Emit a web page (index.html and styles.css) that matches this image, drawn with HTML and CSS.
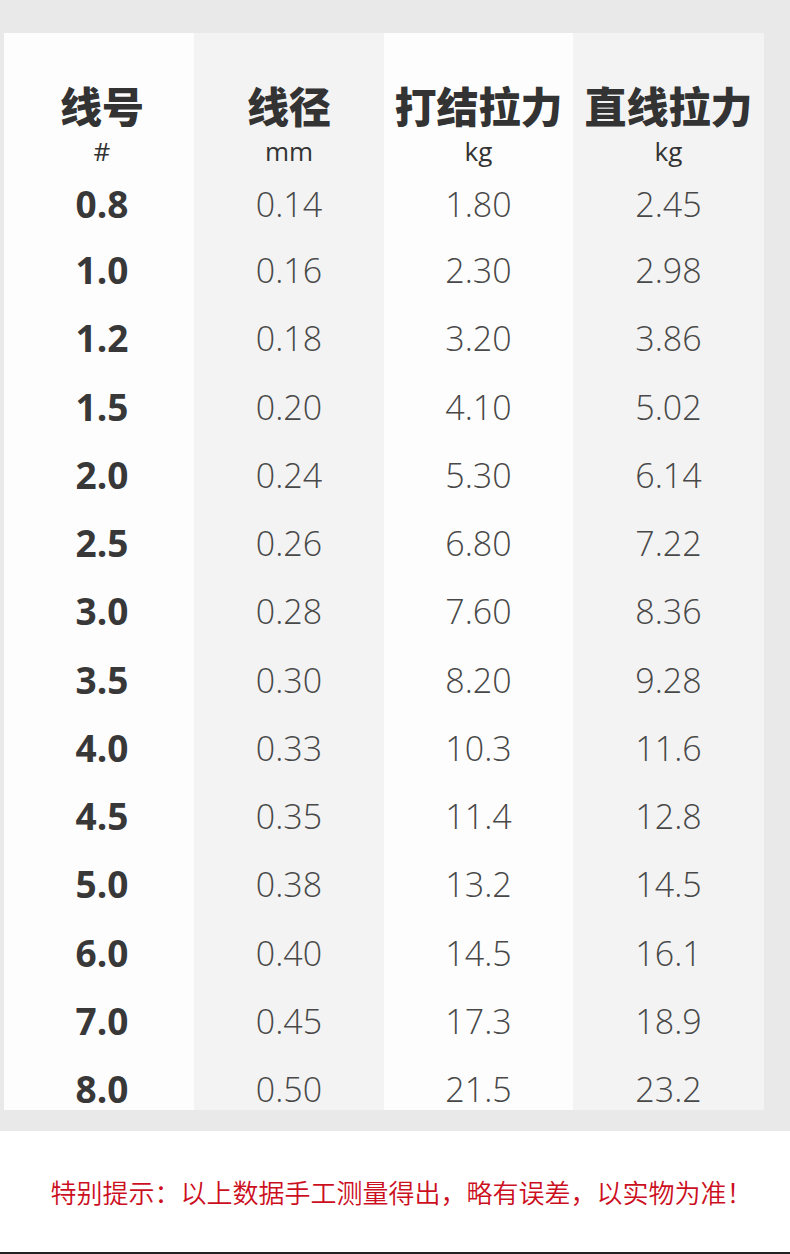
FILE: index.html
```html
<!DOCTYPE html>
<html lang="zh-CN">
<head>
<meta charset="utf-8">
<title>线号规格表</title>
<link rel="stylesheet" href="styles.css">
</head>
<body>
<div class="frame">
  <div class="spec">
    <div class="title lead">线号</div><div class="title">线径</div><div class="title">打结拉力</div><div class="title">直线拉力</div>
    <div class="unit lead">#</div><div class="unit">mm</div><div class="unit">kg</div><div class="unit">kg</div>
    <div class="v b first">0.8</div><div class="v first">0.14</div><div class="v first">1.80</div><div class="v first">2.45</div>
    <div class="v b">1.0</div><div class="v">0.16</div><div class="v">2.30</div><div class="v">2.98</div>
    <div class="v b">1.2</div><div class="v">0.18</div><div class="v">3.20</div><div class="v">3.86</div>
    <div class="v b">1.5</div><div class="v">0.20</div><div class="v">4.10</div><div class="v">5.02</div>
    <div class="v b">2.0</div><div class="v">0.24</div><div class="v">5.30</div><div class="v">6.14</div>
    <div class="v b">2.5</div><div class="v">0.26</div><div class="v">6.80</div><div class="v">7.22</div>
    <div class="v b">3.0</div><div class="v">0.28</div><div class="v">7.60</div><div class="v">8.36</div>
    <div class="v b">3.5</div><div class="v">0.30</div><div class="v">8.20</div><div class="v">9.28</div>
    <div class="v b">4.0</div><div class="v">0.33</div><div class="v">10.3</div><div class="v">11.6</div>
    <div class="v b">4.5</div><div class="v">0.35</div><div class="v">11.4</div><div class="v">12.8</div>
    <div class="v b">5.0</div><div class="v">0.38</div><div class="v">13.2</div><div class="v">14.5</div>
    <div class="v b">6.0</div><div class="v">0.40</div><div class="v">14.5</div><div class="v">16.1</div>
    <div class="v b">7.0</div><div class="v">0.45</div><div class="v">17.3</div><div class="v">18.9</div>
    <div class="v b">8.0</div><div class="v">0.50</div><div class="v">21.5</div><div class="v">23.2</div>
  </div>
</div>
<div class="note">特别提示：以上数据手工测量得出，略有误差，以实物为准！</div>
<div class="rule"></div>
</body>
</html>
```

FILE: styles.css
```css
html, body {
  margin: 0;
  padding: 0;
  background: #ffffff;
}

body {
  width: 790px;
  height: 1254px;
  overflow: hidden;
  font-family: "Open Sans", "Noto Sans", "Noto Sans CJK SC", sans-serif;
}

.frame {
  background: #e9e9e9;
  padding: 33px 26px 21px 4px;
}

.spec {
  display: grid;
  grid-template-columns: 190px 190px 189px 191px;
  grid-template-rows: 97px 42px 64px repeat(12, 68.25px) 55px;
}

.spec > div {
  text-align: center;
  background: #fdfdfd;
  overflow: visible;
  white-space: nowrap;
}

.spec > div:nth-child(4n+1) {
  padding-left: 6px;
}

.spec > div:nth-child(4n+2),
.spec > div:nth-child(4n) {
  background: #f3f3f3;
}

.title {
  padding-top: 47px;
  line-height: 50px;
  font-family: "Noto Sans CJK SC", sans-serif;
  font-weight: 900;
  font-size: 42px;
  color: #333333;
}

.unit {
  line-height: 42px;
  font-size: 26px;
  color: #333333;
}

.v {
  line-height: 68.25px;
  font-size: 34px;
  font-weight: 300;
  color: #484848;
}

.v.first {
  line-height: 64px;
}

.v.b {
  font-size: 37px;
  font-weight: 700;
  color: #383838;
}

.note {
  height: 121px;
  padding-left: 13px;
  display: flex;
  align-items: center;
  justify-content: center;
  font-family: "Noto Sans CJK SC", sans-serif;
  font-size: 26px;
  font-weight: 350;
  color: #cc0f1e;
}

.rule {
  height: 2px;
  background: #222222;
}
```
